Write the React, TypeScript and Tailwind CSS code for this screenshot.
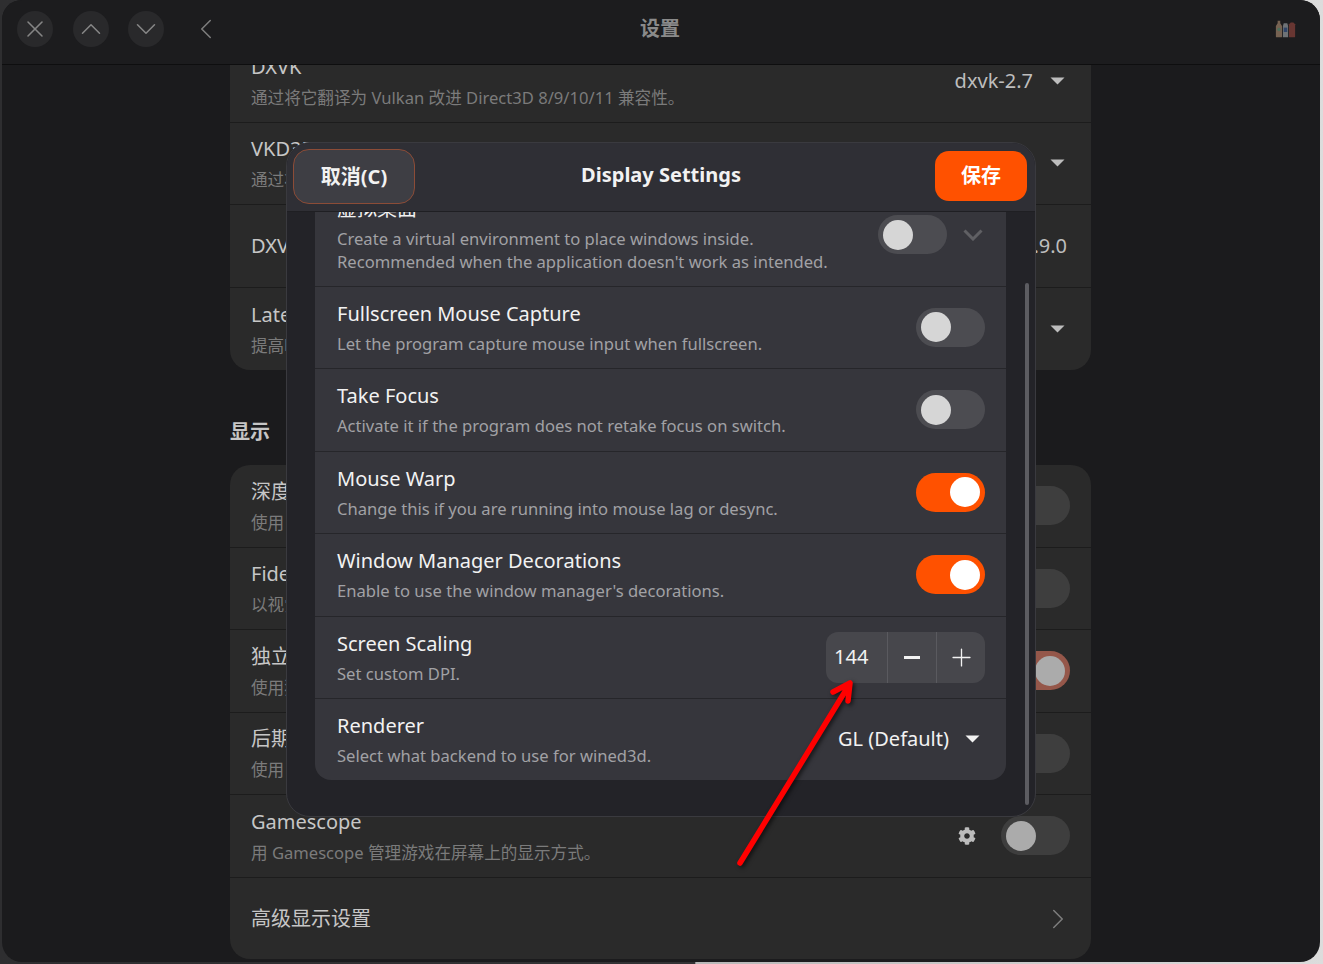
import { ChevronDown, ChevronLeft, ChevronRight, ChevronUp, Plus, X } from "lucide-react";
import { FaCog } from "react-icons/fa";

function Caret({ color = "#bdbdbd" }: { color?: string }) {
  return (
    <svg width="15" height="8" viewBox="0 0 15 8" className="shrink-0">
      <path d="M0.5 0.5h14L7.5 7.5z" fill={color} />
    </svg>
  );
}

function BgToggle({ on = false }: { on?: boolean }) {
  return (
    <div
      className={`flex h-[39px] w-[69px] items-center rounded-full px-[5px] ${
        on ? "justify-end bg-[#95574a]" : "justify-start bg-[#3e3e3e]"
      }`}
    >
      <div className="h-[30px] w-[30px] rounded-full bg-[#ababab]" />
    </div>
  );
}

function Toggle({ on = false }: { on?: boolean }) {
  return (
    <div
      className={`flex h-[39px] w-[69px] items-center rounded-full px-[5px] ${
        on ? "justify-end bg-[#ff5100]" : "justify-start bg-[#4c4c51]"
      }`}
    >
      <div className={`h-[30px] w-[30px] rounded-full ${on ? "bg-white" : "bg-[#d6d6d6]"}`} />
    </div>
  );
}

function BgRow({
  title,
  desc,
  right,
  last,
  tall,
}: {
  title: string;
  desc?: string;
  right?: React.ReactNode;
  last?: boolean;
  tall?: boolean;
}) {
  return (
    <div
      className={`flex items-center justify-between pl-[21px] pr-[21px] ${
        last ? (tall ? "h-[82px]" : "h-[81.5px] pt-[2px]") : "h-[82.5px] border-b border-[#1c1c1c]"
      }`}
    >
      <div className="min-w-0">
        <div className="text-[20px] leading-[30px] text-[#c6c6c6]">{title}</div>
        {desc && <div className="mt-[4px] text-[16.6px] leading-[24px] text-[#7b7b7b]">{desc}</div>}
      </div>
      {right}
    </div>
  );
}

function DialogRow({
  title,
  desc,
  right,
  last,
}: {
  title: string;
  desc: string;
  right?: React.ReactNode;
  last?: boolean;
}) {
  return (
    <div
      className={`flex items-center justify-between pl-[22px] pr-[21px] ${
        last ? "h-[80.5px]" : "h-[82.5px] border-b border-[#26262a]"
      }`}
    >
      <div>
        <div className="text-[20px] leading-[30px] text-[#f2f2f2]">{title}</div>
        <div className="mt-[3px] text-[16.6px] leading-[24px] text-[#a1a1a5]">{desc}</div>
      </div>
      {right}
    </div>
  );
}

function HeaderButton({ children }: { children: React.ReactNode }) {
  return (
    <div className="flex h-[36px] w-[36px] items-center justify-center rounded-full bg-[#29292b] text-[#858585]">
      {children}
    </div>
  );
}

export default function App() {
  return (
    <div
      className="relative h-[964px] w-[1323px] overflow-hidden bg-[linear-gradient(90deg,#2e2e30_0%,#333335_52.5%,#b8b8b8_52.6%,#dcdcdc_100%)]"
      style={{ fontFamily: '"Noto Sans", "Noto Sans CJK SC", sans-serif' }}
    >
      {/* window behind the dialog */}
      <div className="ml-[2px] flex h-[962px] w-[1318px] flex-col overflow-hidden rounded-[20px] bg-[#1b1b1d]">
        <header className="relative flex h-[65px] shrink-0 items-center border-b border-[#0e0e0f] bg-[#1c1c1e] pb-[6px] pl-[15px]">
          <div className="flex gap-[19.5px]">
            <HeaderButton>
              <X size={28} strokeWidth={1.3} />
            </HeaderButton>
            <HeaderButton>
              <ChevronUp size={34} strokeWidth={1.1} />
            </HeaderButton>
            <HeaderButton>
              <ChevronDown size={34} strokeWidth={1.1} />
            </HeaderButton>
          </div>
          <ChevronLeft size={34} strokeWidth={1.1} className="ml-[25px] text-[#7c7c7c]" />
          <div className="absolute left-[638px] top-[15px] text-[20px] font-bold leading-[28px] text-[#8a8a8a]">
            设置
          </div>
          <svg width="21" height="21" viewBox="0 0 24 22" className="absolute right-[24px] top-[18px]">
            <path d="M1 8l2-3V2h3v3l2 3v12q0 1-1 1H2q-1 0-1-1z" fill="#766252" />
            <circle cx="4.5" cy="12" r="2" fill="#4f6f5c" />
            <path d="M9 8l1-3h4l1 3v13H9z" fill="#6e7276" />
            <rect x="10" y="10" width="4" height="5" fill="#2f4468" />
            <path d="M16 6l2-2h3l2 2v14q0 1-1 1h-5q-1 0-1-1z" fill="#683632" />
          </svg>
        </header>

        <main className="min-h-0 flex-1 overflow-hidden pl-[228px]">
          <div className="-mt-[25px] w-[861px]">
            <section className="overflow-hidden rounded-[20px] bg-[#2a2a2a]">
              <BgRow
                title="DXVK"
                desc="通过将它翻译为 Vulkan 改进 Direct3D 8/9/10/11 兼容性。"
                right={
                  <div className="flex items-center gap-[17px] pr-[5px] text-[20px] text-[#bdbdbd]">
                    dxvk-2.7 <Caret />
                  </div>
                }
              />
              <BgRow
                title="VKD3D"
                desc="通过将它翻译为 Vulkan 改进 Direct3D 12 兼容性。"
                right={
                  <div className="pr-[5px]">
                    <Caret />
                  </div>
                }
              />
              <BgRow
                title="DXVK NVAPI"
                right={<div className="pr-[3px] text-[20px] text-[#bdbdbd]">dxvk-nvapi-v0.9.0</div>}
              />
              <BgRow
                title="Latency"
                desc="提高响应速度。"
                last
                tall
                right={
                  <div className="pr-[5px]">
                    <Caret />
                  </div>
                }
              />
            </section>

            <h2 className="mb-[18px] mt-[47.5px] h-[30px] text-[20px] font-bold leading-[30px] text-[#c6c6c6]">显示</h2>

            <section className="overflow-hidden rounded-[20px] bg-[#2a2a2a]">
              <BgRow title="深度学习超级采样" desc="使用 NVIDIA DLSS 提升性能。" right={<BgToggle />} />
              <BgRow title="FidelityFX 超级分辨率" desc="以视觉质量换取性能。" right={<BgToggle />} />
              <BgRow title="独立显卡" desc="使用独立显卡运行程序。" right={<BgToggle on />} />
              <BgRow title="后期处理效果" desc="使用 vkBasalt 添加效果。" right={<BgToggle />} />
              <BgRow
                title="Gamescope"
                desc="用 Gamescope 管理游戏在屏幕上的显示方式。"
                right={
                  <div className="flex items-center gap-[25px]">
                    <FaCog size={18} className="text-[#bcbcbc]" />
                    <BgToggle />
                  </div>
                }
              />
              <BgRow
                title="高级显示设置"
                last
                right={<ChevronRight size={34} strokeWidth={1.1} className="-mr-[5px] text-[#7c7c7c]" />}
              />
            </section>
          </div>
        </main>
      </div>

      {/* Display Settings dialog */}
      <div className="absolute left-[286px] top-[142px] flex h-[675px] w-[750px] flex-col overflow-hidden rounded-[24px] border border-[#3a3a3f] bg-[#232328]">
        <div className="relative flex h-[69px] shrink-0 items-center justify-between border-b border-[#1f1f23] bg-[#2f2f35] pl-[6px] pr-[7px]">
          <button className="-mt-[1px] flex h-[55px] w-[122px] items-center justify-center rounded-[16px] border border-[#8c4c37] bg-[#3e3e44] text-[20px] font-bold text-[#f2f2f2]">
            取消(C)
          </button>
          <div className="absolute left-0 right-0 top-[17px] text-center text-[20px] font-bold leading-[30px] text-[#f2f2f2]">
            Display Settings
          </div>
          <button className="relative -mt-[2px] mr-[1px] flex h-[50px] w-[92px] items-center justify-center rounded-[14px] bg-[#ff5100] text-[20px] font-bold text-white">
            保存
          </button>
        </div>

        <div className="relative min-h-0 flex-1 overflow-hidden">
          <div className="-mt-[30px] ml-[28px] w-[691px] overflow-hidden rounded-[16px] bg-[#36363c]">
            <div className="relative flex h-[104.5px] justify-between border-b border-[#26262a] pl-[22px] pr-[21px] pt-[12px]">
              <div>
                <div className="text-[20px] leading-[30px] text-[#f2f2f2]">虚拟桌面</div>
                <div className="mt-[3px] text-[16.6px] leading-[23px] text-[#a1a1a5]">
                  Create a virtual environment to place windows inside.
                  <br />
                  Recommended when the application doesn't work as intended.
                </div>
              </div>
              <div className="mt-[21px] flex h-[39px] items-center gap-[16px] self-start">
                <Toggle />
                <svg width="20" height="12" viewBox="0 0 20 12" className="mr-[2px]">
                  <path d="M1.5 1.5L10 10l8.5-8.5" fill="none" stroke="#606064" strokeWidth="3" />
                </svg>
              </div>
            </div>
            <DialogRow
              title="Fullscreen Mouse Capture"
              desc="Let the program capture mouse input when fullscreen."
              right={<Toggle />}
            />
            <DialogRow
              title="Take Focus"
              desc="Activate it if the program does not retake focus on switch."
              right={<Toggle />}
            />
            <DialogRow
              title="Mouse Warp"
              desc="Change this if you are running into mouse lag or desync."
              right={<Toggle on />}
            />
            <DialogRow
              title="Window Manager Decorations"
              desc="Enable to use the window manager's decorations."
              right={<Toggle on />}
            />
            <DialogRow
              title="Screen Scaling"
              desc="Set custom DPI."
              right={
                <div className="flex h-[51px] w-[159px] overflow-hidden rounded-[12px] bg-[#47474c] text-[#f2f2f2]">
                  <div className="flex w-[61px] items-center pl-[8px] text-[20px]">144</div>
                  <div className="flex w-[49px] items-center justify-center border-l border-[#5a5a5f]">
                    <div className="h-[3px] w-[16px] bg-[#f2f2f2]" />
                  </div>
                  <div className="flex flex-1 items-center justify-center border-l border-[#5a5a5f]">
                    <Plus size={29} strokeWidth={1.1} />
                  </div>
                </div>
              }
            />
            <DialogRow
              title="Renderer"
              desc="Select what backend to use for wined3d."
              last
              right={
                <div className="flex items-center gap-[16px] pr-[5px] text-[20px] text-[#f2f2f2]">
                  GL (Default) <Caret color="#f2f2f2" />
                </div>
              }
            />
          </div>
          {/* scrollbar */}
          <div className="absolute right-[6px] top-[71px] h-[522px] w-[4px] rounded-full bg-[#5c5c61]" />
        </div>
      </div>

      {/* red annotation arrow */}
      <svg
        width="130"
        height="190"
        viewBox="0 0 130 190"
        className="absolute left-[730px] top-[680px] drop-shadow-[2px_2px_2px_rgba(0,0,0,0.6)]"
      >
        <path
          d="M10 183 L119 5 M103 12 L120 3 L118 21"
          fill="none"
          stroke="#ff0000"
          strokeWidth="5.5"
          strokeLinecap="round"
          strokeLinejoin="round"
        />
      </svg>
    </div>
  );
}
